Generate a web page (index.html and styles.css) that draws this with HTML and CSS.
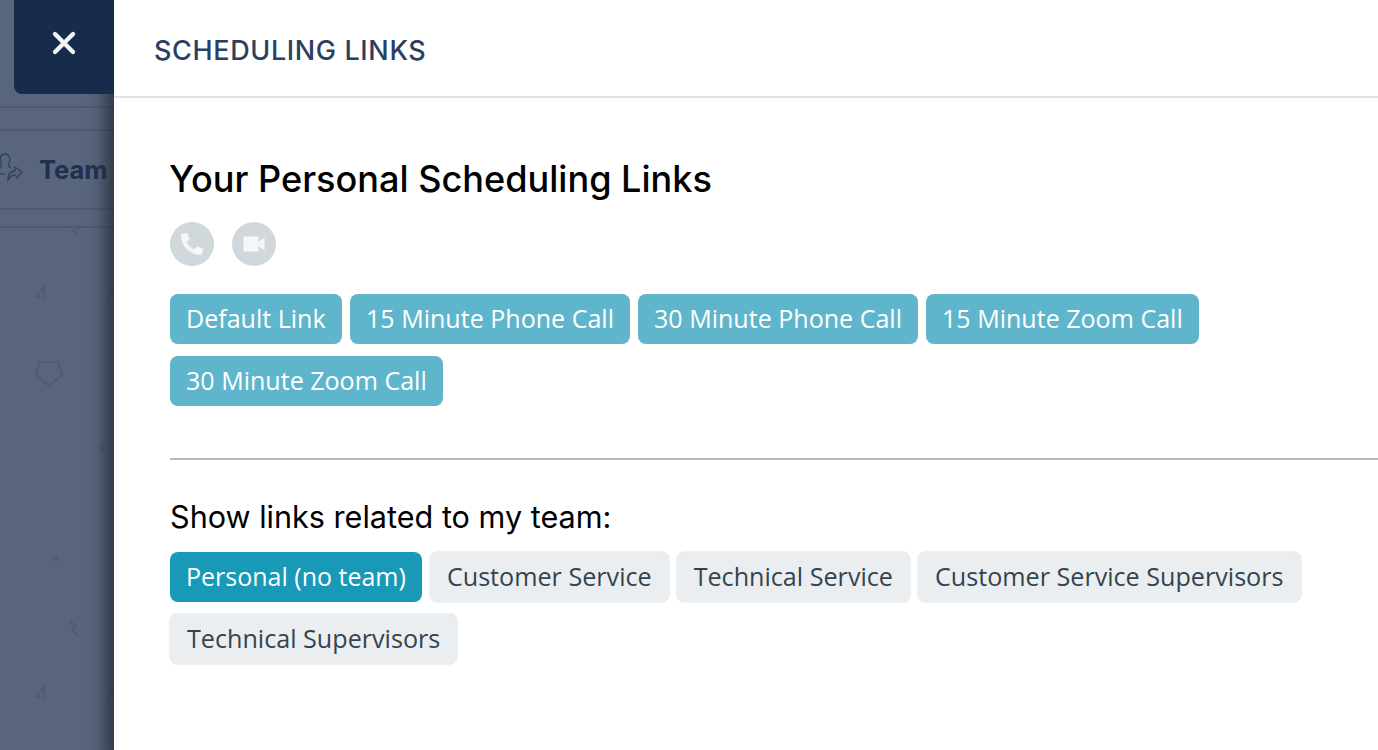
FILE: index.html
```html
<!DOCTYPE html>
<html lang="en">
<head>
    <meta charset="UTF-8">
    <title>Scheduling Links</title>
    <link rel="stylesheet" href="styles.css">
</head>
<body>
    <div class="page">
        <aside class="backdrop">
            <button class="close-tab" aria-label="Close">
                <svg width="26" height="26" viewBox="0 0 26 26"><path d="M4 4 L22 22 M22 4 L4 22" stroke="#f4f5f7" stroke-width="4.4" stroke-linecap="round"/></svg>
            </button>
            <div class="rule rule-first"></div>
            <div class="team-row">
                <svg class="team-icon" width="26" height="34" viewBox="0 0 26 34" fill="none" stroke="#2f4263" stroke-width="1.3">
                    <path d="M0 17 C3 16 4 14 3 11 C1 6 3 2 7 2 C11 2 13 6 11 11 C10 13 11 15 13 16"/>
                    <path d="M0 22 H7"/>
                    <path d="M10 28 C10 22 13 19 17 19 V15 L24 20 L19 26 L17 23 C14 23 12 25 10 28 Z"/>
                </svg>
                <span class="team-label">Team</span>
            </div>
            <div class="rule rule-second"></div>
            <svg class="doodles" width="114" height="522" viewBox="0 0 114 522" fill="none" stroke="#4f5c72" stroke-width="2">
                <path d="M71 0 L78 2 L73 5 L78 9"/>
                <path d="M44 61 L36 71 L45 72 Z"/>
                <path d="M39 136 H58 L62 149 L49 160 L36 149 Z"/>
                <path d="M112 62 L108 76"/>
                <path d="M101 220 h4 v4 h-4 Z"/>
                <circle cx="55" cy="332" r="2"/>
                <path d="M70 395 L76 401 L72 404 L79 410"/>
                <path d="M44 461 L36 471 L45 472 Z"/>
                <path d="M112 462 L108 476"/>
            </svg>
        </aside>
        <main class="panel">
            <header class="panel-header">
                <h2 class="panel-title">SCHEDULING LINKS</h2>
            </header>
            <section class="panel-body">
                <h1 class="section-title">Your Personal Scheduling Links</h1>
                <div class="round-icons">
                    <span class="round-icon">
                        <svg width="22" height="22" viewBox="0 0 512 512"><path fill="#f4f6f7" d="M497.39 361.8l-112-48a24 24 0 0 0-28 6.9l-49.6 60.6A370.66 370.66 0 0 1 130.6 204.11l60.6-49.6a23.94 23.94 0 0 0 6.9-28l-48-112A24.16 24.16 0 0 0 122.6.61l-104 24A24 24 0 0 0 0 48c0 256.5 207.9 464 464 464a24 24 0 0 0 23.4-18.6l24-104a24.29 24.29 0 0 0-14.01-27.6z"/></svg>
                    </span>
                    <span class="round-icon">
                        <svg width="22" height="22" viewBox="0 0 22 22"><path fill="#f4f6f7" d="M2 3.5 H14 C15 3.5 15.5 4 15.5 5 V9 L21.5 4.5 V17.5 L15.5 13 V17 C15.5 18 15 18.5 14 18.5 H2 C1 18.5 0.5 18 0.5 17 V5 C0.5 4 1 3.5 2 3.5 Z"/></svg>
                    </span>
                </div>
                <div class="chips">
                    <a class="chip chip-link">Default Link</a>
                    <a class="chip chip-link">15 Minute Phone Call</a>
                    <a class="chip chip-link">30 Minute Phone Call</a>
                    <a class="chip chip-link">15 Minute Zoom Call</a>
                    <a class="chip chip-link">30 Minute Zoom Call</a>
                </div>
                <hr class="divider">
                <p class="team-prompt">Show links related to my team:</p>
                <div class="chips">
                    <a class="chip chip-active">Personal (no team)</a>
                    <a class="chip chip-team">Customer Service</a>
                    <a class="chip chip-team">Technical Service</a>
                    <a class="chip chip-team">Customer Service Supervisors</a>
                    <a class="chip chip-team">Technical Supervisors</a>
                </div>
            </section>
        </main>
    </div>
</body>
</html>
```

FILE: styles.css
```css
html, body {
    margin: 0;
    padding: 0;
    height: 100%;
    overflow: hidden;
}
body {
    font-family: Inter, "Liberation Sans", sans-serif;
    background-color: #ffffff;
}
.page {
    display: flex;
    height: 750px;
}
.backdrop {
    position: relative;
    width: 114px;
    flex-shrink: 0;
    background-color: #58657c;
    overflow: hidden;
}
.backdrop::after {
    content: "";
    position: absolute;
    top: 94px;
    right: 0;
    bottom: 0;
    width: 30px;
    background: linear-gradient(to right, rgba(40, 46, 58, 0), rgba(40, 46, 58, 0.1) 40%, rgba(40, 46, 58, 0.75));
}
.close-tab {
    display: flex;
    align-items: center;
    justify-content: center;
    box-sizing: border-box;
    width: 100px;
    height: 94px;
    margin-left: 14px;
    padding: 0 0 8px;
    border: none;
    border-bottom-left-radius: 8px;
    background-color: #172b4d;
}
.rule {
    height: 2px;
    background-color: #4d5a70;
}
.rule-first {
    margin-top: 12px;
    box-shadow: 0 23px 0 #4d5a70;
}
.team-row {
    display: flex;
    align-items: center;
    gap: 15px;
    box-sizing: border-box;
    height: 76px;
    margin-top: 24px;
    margin-left: -2px;
    padding-bottom: 2px;
}
.team-label {
    font-size: 25.5px;
    font-weight: 700;
    color: #1e3050;
}
.rule-second {
    box-shadow: 0 18px 0 #4d5a70;
}
.doodles {
    display: block;
    margin-top: 16px;
}
.panel {
    flex: 1;
    min-width: 0;
    background-color: #ffffff;
}
.panel-header {
    display: flex;
    align-items: center;
    box-sizing: border-box;
    height: 98px;
    padding: 4px 0 0 40px;
    border-bottom: 2px solid #dfe3e8;
}
.panel-title {
    margin: 0;
    font-size: 27px;
    letter-spacing: 0.63px;
    font-weight: 500;
    color: #2c3e61;
}
.panel-body {
    padding: 58px 0 0 56px;
}
.section-title {
    margin: 0 0 0 -1px;
    font-size: 36.1px;
    line-height: 46px;
    font-weight: 500;
    color: #000000;
}
.round-icons {
    display: flex;
    gap: 18px;
    margin-top: 20px;
}
.round-icon {
    display: flex;
    align-items: center;
    justify-content: center;
    width: 44px;
    height: 44px;
    border-radius: 50%;
    background-color: #d0d8dc;
}
.chips {
    display: flex;
    flex-wrap: wrap;
    gap: 12px 8px;
    max-width: 1140px;
}
.round-icons + .chips {
    margin-top: 28px;
}
.chip {
    display: block;
    box-sizing: border-box;
    height: 50px;
    padding: 0 16px;
    border-radius: 8px;
    font-family: "Open Sans", "Liberation Sans", sans-serif;
    font-size: 25px;
    line-height: 48px;
    white-space: nowrap;
}
.chip-link {
    font-size: 25.05px;
    background-color: #5fb6cc;
    color: #ffffff;
}
.chip-link:first-child {
    min-width: 172px;
}
.chip-active {
    background-color: #1899b8;
    color: #ffffff;
}
.chip-team {
    padding: 0 17px;
    font-size: 25.15px;
    background-color: #ebeef1;
    color: #34444f;
    box-shadow: 0 0 2px rgba(0, 0, 0, 0.22);
}
.divider {
    height: 2px;
    margin: 52px 0 0;
    border: none;
    background-color: #b0bbc5;
}
.team-prompt {
    margin: 39px 0 17px;
    font-size: 30.6px;
    line-height: 36px;
    color: #000000;
}
```
